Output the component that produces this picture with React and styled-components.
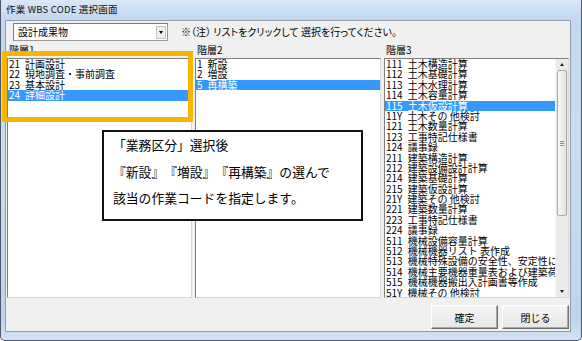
import React from "react";
import styled, { createGlobalStyle } from "styled-components";

const FONT = `"Noto Sans CJK JP", "Noto Sans", sans-serif`;

const GlobalStyle = createGlobalStyle`
  html, body {
    margin: 0;
    padding: 0;
    background: #fff;
    overflow: hidden;
  }
  body {
    font-family: ${FONT};
    color: #000;
    text-spacing-trim: space-all;
  }
`;

const level1 = [
  { code: "21", name: "計画設計" },
  { code: "22", name: "現地調査・事前調査" },
  { code: "23", name: "基本設計" },
  { code: "24", name: "詳細設計", selected: true },
];

const level2 = [
  { code: "1", name: "新設" },
  { code: "2", name: "増設" },
  { code: "5", name: "再構築", selected: true },
];

const level3 = [
  { code: "111", name: "土木構造計算" },
  { code: "112", name: "土木基礎計算" },
  { code: "113", name: "土木水理計算" },
  { code: "114", name: "土木容量計算" },
  { code: "115", name: "土木仮設計算", selected: true },
  { code: "11Y", name: "土木その 他検討" },
  { code: "121", name: "土木数量計算" },
  { code: "123", name: "工事特記仕様書" },
  { code: "124", name: "議事録" },
  { code: "211", name: "建築構造計算" },
  { code: "212", name: "建築設備設計計算" },
  { code: "214", name: "建築基礎計算" },
  { code: "215", name: "建築仮設計算" },
  { code: "21Y", name: "建築その 他検討" },
  { code: "221", name: "建築数量計算" },
  { code: "223", name: "工事特記仕様書" },
  { code: "224", name: "議事録" },
  { code: "511", name: "機械設備容量計算" },
  { code: "512", name: "機械機器リスト 表作成" },
  { code: "513", name: "機械特殊設備の安全性、安定性に関する計算" },
  { code: "514", name: "機械主要機器重量表および建築荷重図" },
  { code: "515", name: "機械機器搬出入計画書等作成" },
  { code: "51Y", name: "機械その 他検討" },
];

function App() {
  return (
    <>
      <GlobalStyle />
      <Window>
        <TitleBar>作業 WBS CODE 選択画面</TitleBar>
        <Client>
          <TopRow>
            <Combo>
              <span>設計成果物</span>
              <DropButton />
            </Combo>
            <Note>※（注） リストをクリックして 選択を行ってください。</Note>
          </TopRow>

          <Columns>
            <Column $width={185}>
              <Label>階層1</Label>
              <ListBox items={level1} />
            </Column>
            <Column $width={186}>
              <Label>階層2</Label>
              <ListBox items={level2} />
            </Column>
            <Column $width={185}>
              <Label>階層3</Label>
              <ListBox items={level3} scroll />
            </Column>
          </Columns>

          <ButtonRow>
            <Button>確定</Button>
            <Button>閉じる</Button>
          </ButtonRow>
        </Client>

        <Highlight />
        <Callout>
          <div>「業務区分」選択後</div>
          <div>『新設』『増設』『再構築』の選んで</div>
          <div>該当の作業コードを指定します。</div>
        </Callout>
      </Window>
    </>
  );
}

function ListBox({ items, scroll }) {
  return (
    <List>
      <Rows>
        {items.map((item) => (
          <Row key={item.code} $selected={item.selected}>
            <Code>{item.code}</Code>
            {item.name}
          </Row>
        ))}
      </Rows>
      {scroll && (
        <ScrollBar>
          <Arrow $up />
          <Track>
            <Thumb />
          </Track>
          <Arrow />
        </ScrollBar>
      )}
    </List>
  );
}

export default App;

const Window = styled.div`
  position: relative;
  width: 582px;
  height: 341px;
  box-sizing: border-box;
  display: flex;
  flex-direction: column;
  padding: 0 10px 8px 4px;
  border: 1px solid #4a586b;
  border-top: none;
  border-radius: 0 0 5px 5px;
  background: linear-gradient(
    180deg,
    #dbe8f6 0%,
    #c8dbf0 4%,
    #c3d7ee 6%,
    #c9dcf1 40%,
    #bfd4ec 94%,
    #d3e2f3 100%
  );
`;

const TitleBar = styled.div`
  height: 20px;
  margin-left: 1px;
  font-size: 9.5px;
  line-height: 19px;
  letter-spacing: 0.2px;
  color: #111;
  white-space: nowrap;
`;

const Client = styled.div`
  flex: 1;
  display: flex;
  flex-direction: column;
  padding: 2px 1px 2px 1px;
  border: 1px solid #8e9db2;
  background: #f0f0f0;
`;

const TopRow = styled.div`
  display: flex;
  align-items: center;
  height: 18px;
  padding-left: 6px;
`;

const Combo = styled.div`
  width: 155px;
  height: 18px;
  box-sizing: border-box;
  display: flex;
  align-items: center;
  justify-content: space-between;
  padding: 0 1px 0 4px;
  background: #fff;
  border: 1px solid #9a9a9a;
  border-top-color: #7c7c7c;
  border-left-color: #7c7c7c;
  font-size: 10px;
  line-height: 14px;
`;

const DropButton = styled.div`
  position: relative;
  width: 10px;
  height: 13px;
  box-sizing: border-box;
  background: #f0f0f0;
  border: 1px solid #c4c4c4;

  &::after {
    content: "";
    position: absolute;
    left: 1.5px;
    top: 4px;
    border-left: 2.5px solid transparent;
    border-right: 2.5px solid transparent;
    border-top: 3px solid #000;
  }
`;

const Note = styled.div`
  margin-left: 13px;
  font-size: 10px;
  line-height: 14px;
  font-feature-settings: "palt";
  white-space: nowrap;
`;

const Columns = styled.div`
  display: flex;
  gap: 3px;
  margin-top: 2px;
`;

const Column = styled.div`
  width: ${(p) => p.$width}px;
  display: flex;
  flex-direction: column;
`;

const Label = styled.div`
  height: 12px;
  padding-left: 2px;
  font-size: 10px;
  line-height: 14px;
`;

const List = styled.div`
  height: 240px;
  box-sizing: border-box;
  margin-top: 3px;
  display: flex;
  background: #fff;
  border: 1px solid #d6d6d6;
  border-top-color: #7f7f7f;
  border-left-color: #7f7f7f;
`;

const Rows = styled.div`
  flex: 1;
  min-width: 0;
  overflow: hidden;
`;

const Row = styled.div`
  height: 10.4px;
  padding-left: 1px;
  font-size: 10px;
  line-height: 10.4px;
  white-space: nowrap;
  background: ${(p) => (p.$selected ? "#3399ff" : "transparent")};
  color: ${(p) => (p.$selected ? "#fff" : "#000")};
`;

const Code = styled.span`
  margin-right: 5px;
`;

const ScrollBar = styled.div`
  width: 12px;
  display: flex;
  flex-direction: column;
  background: #eaeaea;
  border-left: 1px solid #f4f4f4;
`;

const Arrow = styled.div`
  position: relative;
  height: 11px;

  &::after {
    content: "";
    position: absolute;
    left: 3.5px;
    top: 4px;
    border-left: 2.5px solid transparent;
    border-right: 2.5px solid transparent;
    ${(p) =>
      p.$up ? "border-bottom: 3px solid #222;" : "border-top: 3px solid #222;"}
  }
`;

const Track = styled.div`
  flex: 1;
`;

const Thumb = styled.div`
  position: relative;
  height: 146px;
  margin: 0 1px 0 1px;
  box-sizing: border-box;
  border: 1px solid #a8a8a8;
  border-radius: 2px;
  background: linear-gradient(90deg, #f6f6f6, #e4e4e4);

  &::after {
    content: "";
    position: absolute;
    left: 2px;
    right: 2px;
    top: 70px;
    height: 1px;
    background: #8a8a8a;
    box-shadow: 0 2px 0 #8a8a8a, 0 4px 0 #8a8a8a;
  }
`;

const ButtonRow = styled.div`
  display: flex;
  justify-content: flex-end;
  gap: 4px;
  margin-top: 7px;
`;

const Button = styled.div`
  width: 67px;
  height: 24px;
  box-sizing: border-box;
  display: flex;
  align-items: center;
  justify-content: center;
  font-size: 10px;
  background: linear-gradient(180deg, #f6f6f6, #e6e6e6);
  border: 1px solid #fff;
  border-right-color: #6e6e6e;
  border-bottom-color: #6e6e6e;
  box-shadow: inset -1px -1px 0 #a8a8a8;
`;

const Highlight = styled.div`
  position: absolute;
  left: 1px;
  top: 51px;
  width: 191px;
  height: 71px;
  box-sizing: border-box;
  border: 5px solid #f7b500;
`;

const Callout = styled.div`
  position: absolute;
  left: 101px;
  top: 130px;
  width: 261px;
  height: 91px;
  box-sizing: border-box;
  padding-left: 9px;
  background: #fff;
  border: 2px solid #111;
  font-size: 12.8px;
  line-height: 26.5px;
  white-space: nowrap;
  text-spacing-trim: space-all;
`;
